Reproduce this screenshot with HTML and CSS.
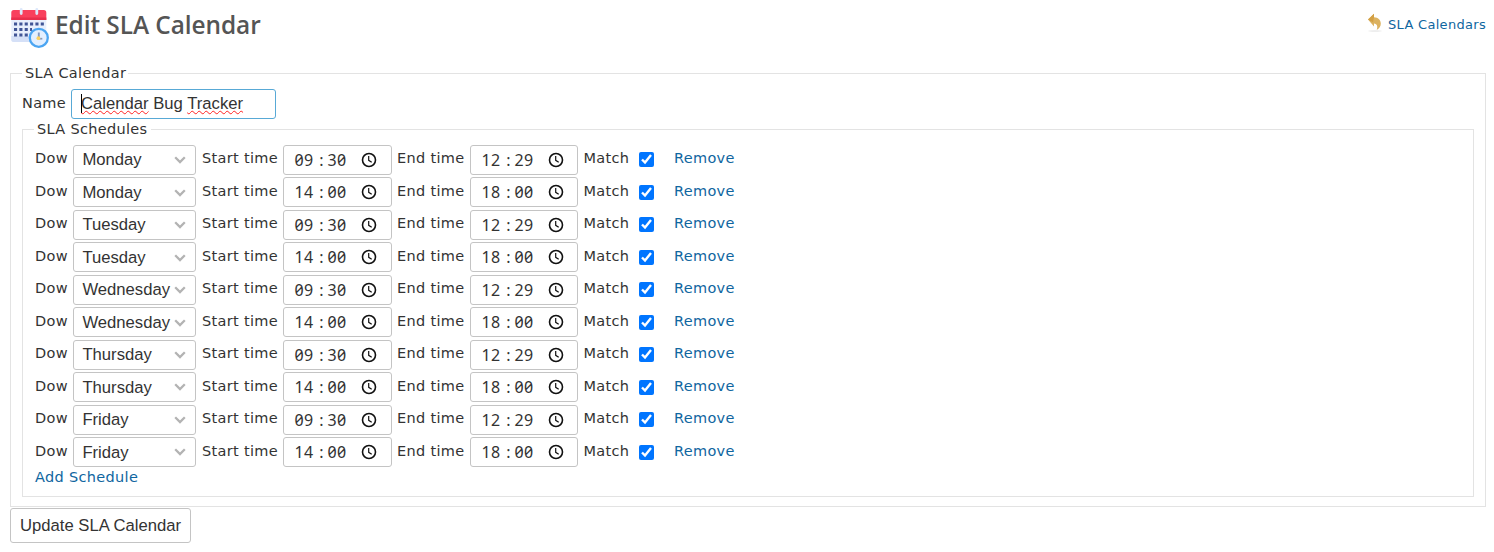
FILE: index.html
```html
<!DOCTYPE html>
<html lang="en">
<head>
<meta charset="utf-8">
<title>Edit SLA Calendar</title>
<link rel="stylesheet" href="styles.css">
</head>
<body>
<header class="header">
  <svg class="logo" width="40" height="40" viewBox="0 0 40 40">
    <rect x="1.3" y="3" width="35" height="31" rx="2.5" fill="#e8effc"/>
    <path d="M1.3 28h35v3.500a2.500 2.500 0 0 1-2.500 2.500h-30a2.500 2.500 0 0 1-2.500-2.500z" fill="#d5e0f7"/>
    <path d="M1.300 12V4.500a2.500 2.500 0 0 1 2.500-2.500h30a2.500 2.500 0 0 1 2.500 2.500V12z" fill="#f9405d"/>
    <path d="M1.300 9.500h35V12h-35z" fill="#e92f4d"/>
    <path d="M11.200 1.500v4M26.800 1.500v4" stroke="#dce8fb" stroke-width="2.800" stroke-linecap="round"/>
    <path d="M4 16h30M4 21.500h18M4 27h14" stroke="#415596" stroke-width="3" stroke-dasharray="3.100 2.250"/>
    <circle cx="28.800" cy="29.800" r="9" fill="#e3efff" stroke="#4ba5f2" stroke-width="2.300"/>
    <path d="M28.800 24.500v6" stroke="#8398c0" stroke-width="1.900"/>
    <path d="M28.800 30.700h3.500" stroke="#8398c0" stroke-width="1.700"/>
    <circle cx="28.400" cy="30.200" r="1.900" fill="#ffd15c"/>
  </svg>
  <h1 class="title">Edit SLA Calendar</h1>
  <a class="back">
    <svg width="16" height="20" viewBox="0 0 16 20">
      <ellipse cx="8" cy="18" rx="7" ry=".8" fill="#e9e9e9"/>
      <path d="M1 6.500 7 .8v3.400c4.500 0 6.800 3 6.800 6.400 0 2.700-1.500 5-4.100 6.300 1.300-3.400.5-6.100-2.700-6.400v3z" fill="#dcb260"/>
      <path d="M1 6.500 7 .8v3.400l-1 5z" fill="#d3a044"/>
    </svg>
    <span class="back-text">SLA Calendars</span>
  </a>
</header>
<form class="form">
  <fieldset class="calendar">
    <legend class="legend">SLA Calendar</legend>
    <div class="name-row">
      <label class="name-label">Name</label>
      <div class="name-input"><span class="caret"></span><span class="misspelt">Calendar</span> Bug <span class="misspelt">Tracker</span></div>
    </div>
    <fieldset class="schedules">
      <legend class="legend">SLA Schedules</legend>
      <div id="rows"></div>
      <a class="add">Add Schedule</a>
    </fieldset>
  </fieldset>
  <button class="submit" type="button">Update SLA Calendar</button>
</form>
<script src="rows.js"></script>
</body>
</html>
```
FILE: rows.js
```js
const days = ['Monday', 'Tuesday', 'Wednesday', 'Thursday', 'Friday'];
const slots = [['09:30', '12:29'], ['14:00', '18:00']];

const timeField = value => {
  const [h, m] = value.split(':');
  return `<div class="time"><span class="digits">${h}</span><span class="colon">:</span><span class="digits">${m}</span>
    <svg class="clock" width="16" height="16" viewBox="0 0 16 16" fill="none" stroke="#111">
      <circle cx="8" cy="8" r="6.500" stroke-width="1.600"/><path d="M7.700 4v4.300l3 1.900" stroke-width="1.200"/>
    </svg></div>`;
};

document.getElementById('rows').innerHTML = days.flatMap(day => slots.map(([start, end]) => `
  <div class="row">
    <label class="label dow">Dow</label>
    <div class="select">${day}<svg class="chevron" width="12" height="8" viewBox="0 0 12 8" fill="none" stroke="#b3b3b3" stroke-width="2.300"><path d="M1.200 1.200 6 6l4.800-4.800"/></svg></div>
    <label class="label start">Start time</label>${timeField(start)}
    <label class="label end">End time</label>${timeField(end)}
    <label class="label match">Match</label>
    <input class="check" type="checkbox" checked>
    <a class="label remove">Remove</a>
  </div>`)).join('');
```
FILE: styles.css
```css
* { box-sizing: border-box; }
body {
  margin: 0;
  padding: 0 8px 0 10px;
  background: #fff;
  color: #333;
  font: 14.5px/18px Verdana, "DejaVu Sans", sans-serif;
  letter-spacing: .32px;
}
a { color: #0f66a0; text-decoration: none; }
.header { display: flex; height: 64px; align-items: flex-start; }
.logo { margin-top: 8px; }
.title {
  margin: 9px 0 0 5px;
  color: #555;
  font: 600 24.4px/32px "Trebuchet MS", "Open Sans", sans-serif;
  letter-spacing: -.05px;
}
.back { display: flex; margin: 13px 0 0 auto; font-size: 13px; letter-spacing: .3px; }
.back-text { margin: 3px 0 0 5px; }
.calendar, .schedules { min-width: 0; margin: 0; border: 1px solid #e3e3e3; }
.calendar { height: 443px; padding: 0 11px; }
.legend { height: 18px; padding: 0 3px; margin-left: 0; white-space: nowrap; }
.calendar > .legend { padding-right: 2px; }
.name-row { display: flex; height: 38px; padding-top: 7px; }
.name-label { width: 49px; padding-top: 5px; }
.name-input {
  position: relative;
  width: 205px;
  height: 30px;
  padding: 0 9px;
  border: 1px solid #58a9d6;
  border-radius: 3px;
  font: 16.67px/28px Arial, "Liberation Sans", sans-serif;
  letter-spacing: 0;
  white-space: pre;
}
.caret { position: absolute; left: 9px; top: 4px; width: 1px; height: 19px; background: #000; }
.misspelt { text-decoration: underline wavy #f22 1.3px; text-underline-offset: 1px; text-decoration-skip-ink: none; }
.schedules { height: 377px; padding: 0 12px; }
.schedules .legend { margin-left: -1px; }
#rows { padding-top: 7px; }
.row { display: flex; height: 32.48px; }
.label { padding-top: 4.3px; white-space: nowrap; }
.dow { width: 38px; }
.start { width: 81px; }
.end { width: 73px; }
.match { width: 55px; margin-left: -.5px; margin-right: .5px; }
.select, .time {
  display: flex;
  align-items: center;
  height: 30px;
  border: 1px solid #c4c4c4;
  border-radius: 3px;
}
.select {
  position: relative;
  width: 123px;
  margin-right: 6px;
  padding: .6px 0 0 8.4px;
  font: 16.67px/28px Arial, "Liberation Sans", sans-serif;
  letter-spacing: 0;
}
.chevron { position: absolute; right: 9px; top: 10.2px; }
.time {
  width: 109px;
  margin-right: 5px;
  padding-left: 10.4px;
  font: 16px/28px "Noto Sans", sans-serif;
  font-feature-settings: "zero";
}
.time + .end + .time { margin-right: 6px; width: 108px; }
.digits { width: 21px; letter-spacing: .45px; }
.colon { width: 12px; text-align: center; letter-spacing: 0; }
.clock { margin-left: 12.5px; }
.check { width: 15px; height: 15px; margin: 7.4px 20px 0 0; accent-color: #0075ff; }
.add { display: block; margin-top: -1.500px; }
.submit {
  display: block;
  width: 181px;
  height: 35px;
  margin-top: 1px;
  padding: 0;
  border: 1px solid #c4c4c4;
  border-radius: 3px;
  background: #fff;
  color: #333;
  font: 16.67px Arial, "Liberation Sans", sans-serif;
}
```
